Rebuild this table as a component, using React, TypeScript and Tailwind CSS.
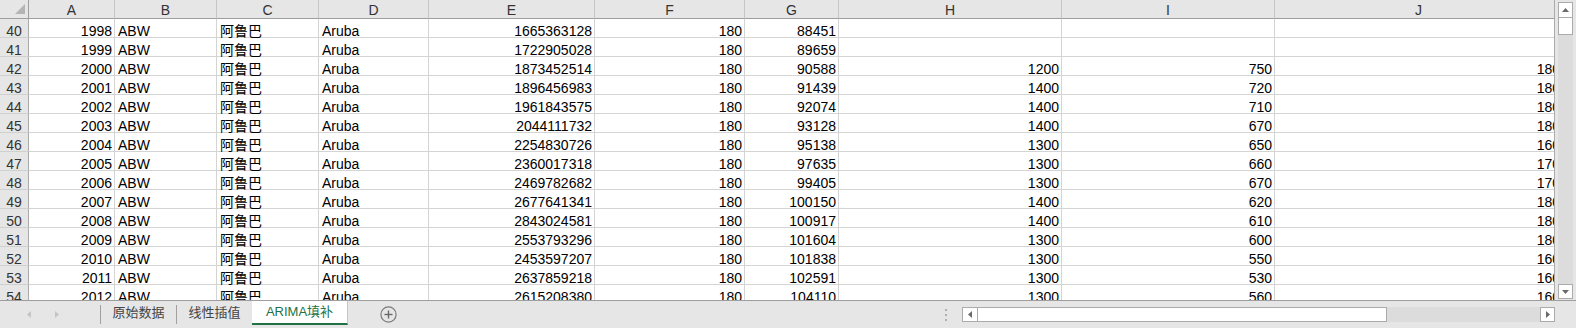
import clsx from "clsx";

const FONT = "font-['Liberation_Sans','Noto_Sans_CJK_SC',sans-serif]";
const COLS =
  "grid w-[1563px] grid-cols-[29px_86px_102px_102px_110px_166px_150px_94px_223px_213px_288px]";

const LETTERS = ["A", "B", "C", "D", "E", "F", "G", "H", "I", "J"];

// year, pop, f, g, h, i, j
const ROWS: [number, string, string, string, string, string, string][] = [
  [1998, "1665363128", "180", "88451", "", "", ""],
  [1999, "1722905028", "180", "89659", "", "", ""],
  [2000, "1873452514", "180", "90588", "1200", "750", "180"],
  [2001, "1896456983", "180", "91439", "1400", "720", "180"],
  [2002, "1961843575", "180", "92074", "1400", "710", "180"],
  [2003, "2044111732", "180", "93128", "1400", "670", "180"],
  [2004, "2254830726", "180", "95138", "1300", "650", "160"],
  [2005, "2360017318", "180", "97635", "1300", "660", "170"],
  [2006, "2469782682", "180", "99405", "1300", "670", "170"],
  [2007, "2677641341", "180", "100150", "1400", "620", "180"],
  [2008, "2843024581", "180", "100917", "1400", "610", "180"],
  [2009, "2553793296", "180", "101604", "1300", "600", "180"],
  [2010, "2453597207", "180", "101838", "1300", "550", "160"],
  [2011, "2637859218", "180", "102591", "1300", "530", "160"],
  [2012, "2615208380", "180", "104110", "1300", "560", "160"],
];

function Cell({ v, right }: { v?: string | number; right?: boolean }) {
  return (
    <div
      className={clsx(
        "flex h-[19px] items-end whitespace-nowrap border-r border-b border-[#d4d4d4] px-[2px] leading-[12px] text-black",
        right ? "justify-end" : "justify-start pl-[3px]",
      )}
    >
      {v}
    </div>
  );
}

function SheetGrid() {
  return (
    <div className="h-[300px] w-[1555px] overflow-hidden border-r border-[#ababab] bg-white">
      <div className={COLS}>
        <div className="relative h-[19px] border-r border-b border-[#9e9e9e] bg-[#e6e6e6]">
          <svg width="29" height="18" className="absolute left-0 top-0">
            <polygon points="25,4 25,14 15,14" fill="#b4b4b4" />
          </svg>
        </div>
        {LETTERS.map((l) => (
          <div
            key={l}
            className="flex h-[19px] items-end justify-center border-r border-b border-r-[#c6c6c6] border-b-[#9e9e9e] bg-[#e6e6e6] pb-[1px] leading-[14px] text-[#333]"
          >
            {l}
          </div>
        ))}
      </div>
      {ROWS.map(([year, pop, f, g, h, i, j], idx) => (
        <div key={year} className={COLS}>
          <div className="flex h-[19px] items-end justify-center border-r border-b border-r-[#ababab] border-b-[#d0d0d0] bg-[#e6e6e6] leading-[12px] text-[#333]">
            {40 + idx}
          </div>
          <Cell v={year} right />
          <Cell v="ABW" />
          <Cell v="阿鲁巴" />
          <Cell v="Aruba" />
          <Cell v={pop} right />
          <Cell v={f} right />
          <Cell v={g} right />
          <Cell v={h} right />
          <Cell v={i} right />
          <Cell v={j} right />
        </div>
      ))}
    </div>
  );
}

function VScroll() {
  return (
    <div className="flex h-[300px] w-[21px] flex-col bg-[#e6e6e6] px-[3px] pt-[2px] pb-[1px]">
      <div className="flex h-[16px] items-center justify-center border border-[#ababab] bg-white">
        <svg width="7" height="4">
          <polygon points="0,4 7,4 3.5,0" fill="#6a6a6a" />
        </svg>
      </div>
      <div className="h-[17px] border border-t-0 border-[#ababab] bg-white" />
      <div className="flex-1 bg-[#dcdcdc]" />
      <div className="flex h-[15px] items-center justify-center border border-[#ababab] bg-white">
        <svg width="7" height="4">
          <polygon points="0,0 7,0 3.5,4" fill="#6a6a6a" />
        </svg>
      </div>
    </div>
  );
}

function HScroll() {
  return (
    <div className="flex h-[15px] w-[593px]">
      <div className="flex w-[16px] items-center justify-center border border-[#ababab] bg-white">
        <svg width="4" height="7">
          <polygon points="4,0 4,7 0,3.5" fill="#6a6a6a" />
        </svg>
      </div>
      <div className="w-[409px] border-y border-r border-[#ababab] bg-white" />
      <div className="flex-1 bg-[#dcdcdc]" />
      <div className="flex w-[15px] items-center justify-center border border-[#ababab] bg-white">
        <svg width="4" height="7">
          <polygon points="0,0 0,7 4,3.5" fill="#6a6a6a" />
        </svg>
      </div>
    </div>
  );
}

function SheetTabs() {
  return (
    <div className="flex h-[28px] items-center border-t border-[#9e9e9e] bg-[#e6e6e6] text-[13px]">
      <div className="flex w-[100px] items-center gap-[24px] pl-[27px]">
        <svg width="4" height="7">
          <polygon points="4,0 4,7 0,3.5" fill="#c4c4c4" />
        </svg>
        <svg width="4" height="7">
          <polygon points="0,0 0,7 4,3.5" fill="#c4c4c4" />
        </svg>
      </div>
      <div className="h-[19px] w-px bg-[#a0a0a0]" />
      <div className="flex h-[24px] w-[75px] items-center justify-center self-start text-[#444]">
        原始数据
      </div>
      <div className="h-[19px] w-px bg-[#a0a0a0]" />
      <div className="flex h-[24px] w-[75px] items-center justify-center self-start text-[#444]">
        线性插值
      </div>
      <div className="flex h-[24px] w-[96px] items-center justify-center self-start border-r border-b-2 border-r-[#c6c6c6] border-b-[#217346] bg-white text-[#217346]">
        ARIMA填补
      </div>
      <svg width="17" height="17" className="ml-[32px]">
        <circle cx="8.5" cy="8.5" r="7.6" fill="none" stroke="#7a7a7a" strokeWidth="1.2" />
        <line x1="8.5" y1="4.5" x2="8.5" y2="12.5" stroke="#6a6a6a" strokeWidth="1.4" />
        <line x1="4.5" y1="8.5" x2="12.5" y2="8.5" stroke="#6a6a6a" strokeWidth="1.4" />
      </svg>
      <div className="ml-auto mr-[15px] flex flex-col gap-[3px]">
        <div className="h-[2px] w-[2px] bg-[#b0b0b0]" />
        <div className="h-[2px] w-[2px] bg-[#b0b0b0]" />
        <div className="h-[2px] w-[2px] bg-[#b0b0b0]" />
      </div>
      <HScroll />
      <div className="w-[21px]" />
    </div>
  );
}

export default function App() {
  return (
    <div className={clsx("h-[328px] w-[1576px] overflow-hidden text-[14px]", FONT)}>
      <div className="flex">
        <SheetGrid />
        <VScroll />
      </div>
      <SheetTabs />
    </div>
  );
}
